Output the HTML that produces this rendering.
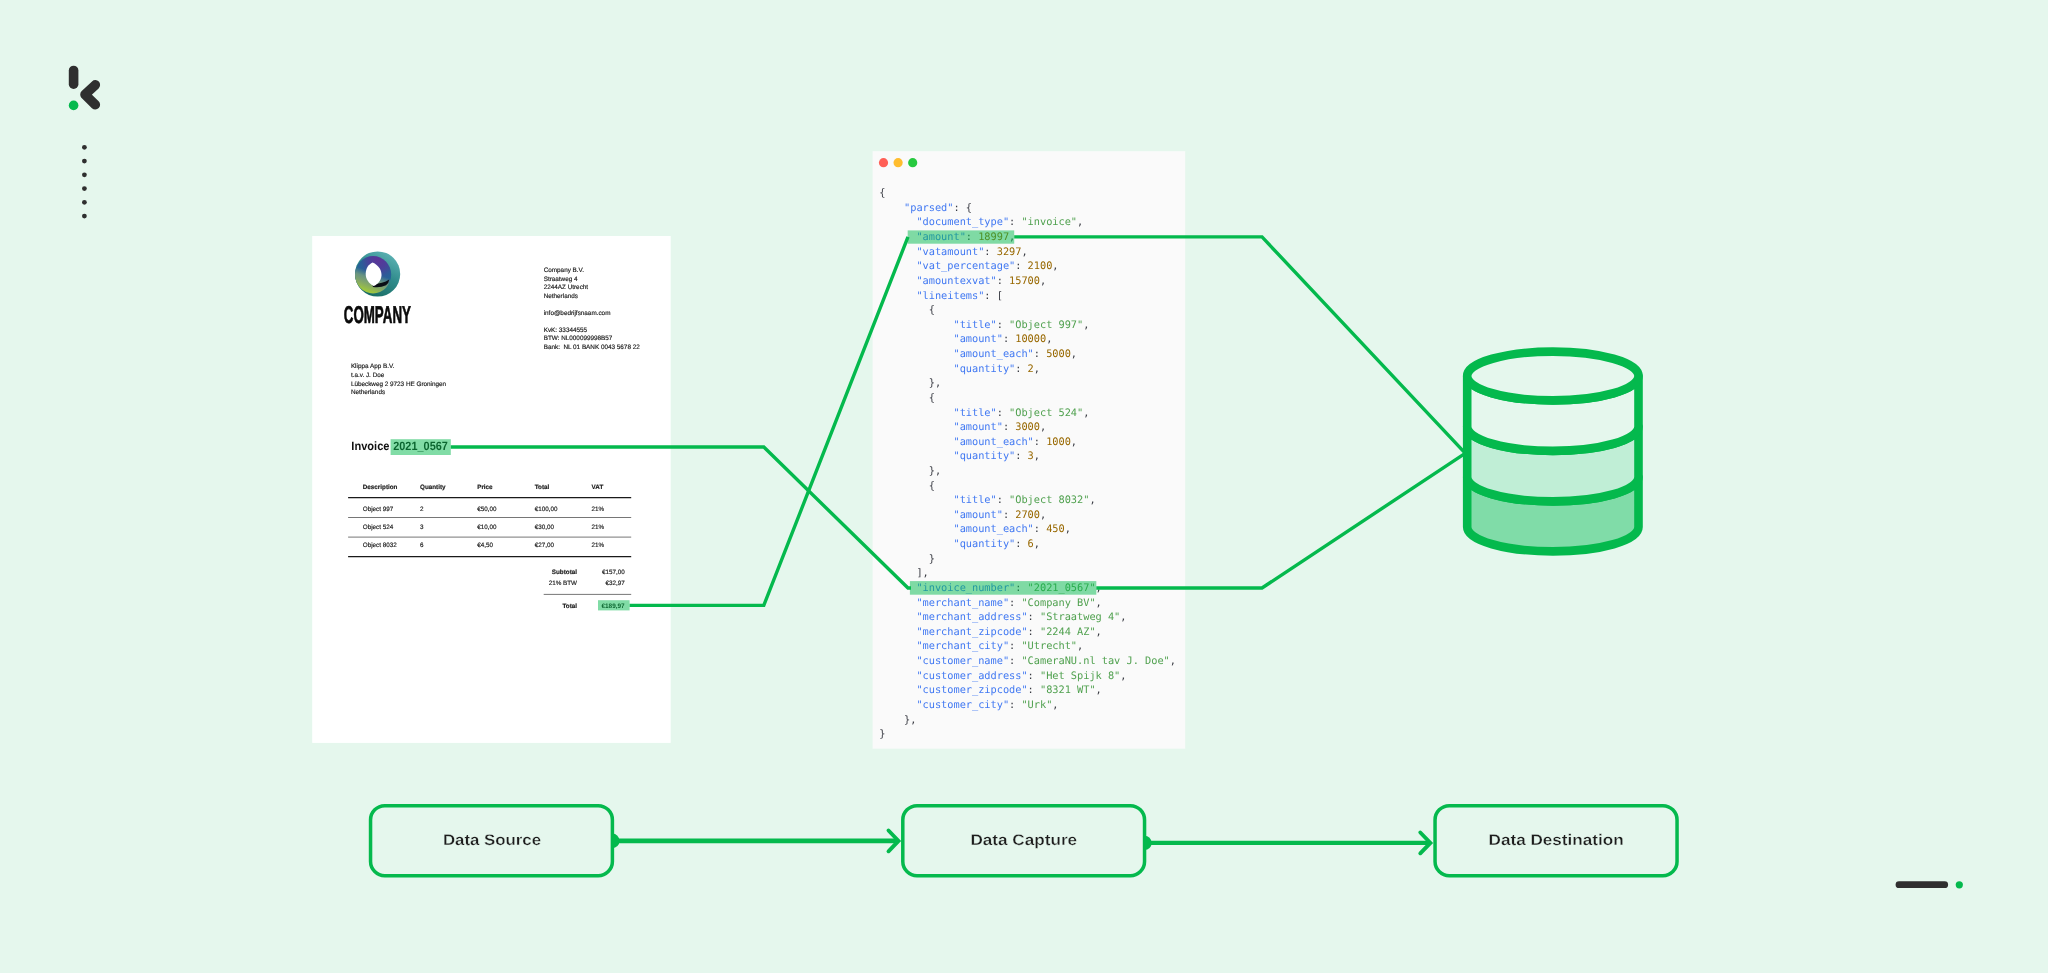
<!DOCTYPE html>
<html lang="en">
<head>
<meta charset="utf-8">
<title>Data Source - Data Capture - Data Destination</title>
<style>
html,body{margin:0;padding:0;background:#e5f7ed;}
body{width:2048px;height:973px;overflow:hidden;position:relative;font-family:"Liberation Sans",sans-serif;}
svg{position:absolute;left:0;top:0;display:block;will-change:transform;}
svg text{font-family:"Liberation Sans",sans-serif;text-rendering:geometricPrecision;}
svg .code text{font-family:"DejaVu Sans Mono","Liberation Mono",monospace;font-size:10.3px;white-space:pre;}
svg .lbl text{font-family:"Liberation Sans",sans-serif;font-weight:bold;font-size:15.4px;fill:#1c1c1c;text-anchor:middle;stroke:#e5f7ed;stroke-width:0.3px;}
</style>
</head>
<body>
<svg width="2048" height="973" viewBox="0 0 2048 973">
<defs>
<linearGradient id="gOuter" x1="0.8" y1="0.1" x2="0.3" y2="1">
<stop offset="0" stop-color="#58aeb0"/><stop offset="0.45" stop-color="#2e8a8a"/><stop offset="1" stop-color="#186a60"/>
</linearGradient>
<radialGradient id="gInner" cx="0.64" cy="0.1" r="0.62">
<stop offset="0" stop-color="#5c3498"/><stop offset="0.4" stop-color="#4b409a"/><stop offset="0.75" stop-color="#2c5c98"/><stop offset="1" stop-color="#236596"/>
</radialGradient>
<linearGradient id="gGreen" x1="0.58" y1="0.2" x2="0.3" y2="1">
<stop offset="0" stop-color="#6a9684" stop-opacity="0"/><stop offset="0.3" stop-color="#6a9684" stop-opacity="0"/><stop offset="0.5" stop-color="#6f9880" stop-opacity="0.92"/><stop offset="0.72" stop-color="#86a964"/><stop offset="0.9" stop-color="#9cc440"/><stop offset="1" stop-color="#a4cc38"/>
</linearGradient>
</defs>
<rect x="0" y="0" width="2048" height="973" fill="#e5f7ed"/>

<!-- klippa mark -->
<g>
<line x1="73.6" y1="70.5" x2="73.6" y2="84.2" stroke="#2f2f2f" stroke-width="9.6" stroke-linecap="round"/>
<circle cx="73.6" cy="105.4" r="4.8" fill="#04b94d"/>
<polyline points="95.3,84.9 85.0,94.6 95.3,104.7" fill="none" stroke="#2f2f2f" stroke-width="9.6" stroke-linecap="round" stroke-linejoin="round"/>
</g>
<g fill="#2f2f2f">
<circle cx="84.4" cy="147.30" r="2.4"/><circle cx="84.4" cy="161.05" r="2.4"/><circle cx="84.4" cy="174.80" r="2.4"/><circle cx="84.4" cy="188.55" r="2.4"/><circle cx="84.4" cy="202.30" r="2.4"/><circle cx="84.4" cy="216.05" r="2.4"/>
</g>
<rect x="1895.6" y="881.3" width="52.5" height="6.8" rx="3.4" fill="#2f2f2f"/>
<circle cx="1959.3" cy="884.8" r="3.6" fill="#04b94d"/>

<!-- invoice page -->
<rect x="312.2" y="236" width="358.5" height="506.9" fill="#ffffff"/>
<g>
<circle cx="377.6" cy="274" r="22.6" fill="url(#gOuter)"/>
<ellipse cx="373.1" cy="274.7" rx="18.1" ry="18.7" fill="url(#gInner)"/>
<ellipse cx="373.1" cy="274.7" rx="18.1" ry="18.7" fill="url(#gGreen)"/>
<path d="M372 284 Q383 284 389.2 279.6 Q389 283.2 386 285.2 Q380 288.2 373 287 Z" fill="#0a0e14"/>
<path d="M372.6 262.5 C378.6 265 381.8 270.5 381.5 275.6 C381.1 281 377.3 284.8 373.6 286.1 C368.8 283.2 365.5 279 365.7 273.4 C365.9 268 368.8 264.3 372.6 262.5 Z" fill="#ffffff"/>
</g>
<text x="343.8" y="323.3" font-size="24.2" font-weight="bold" fill="#0a0a0a" stroke="#0a0a0a" stroke-width="0.7" textLength="67.1" lengthAdjust="spacingAndGlyphs">COMPANY</text>
<text x="543.70" y="272.40" font-size="6.35" fill="#1a1a1a" stroke="#1a1a1a" stroke-width="0.16">Company B.V.</text>
<text x="543.70" y="280.80" font-size="6.35" fill="#1a1a1a" stroke="#1a1a1a" stroke-width="0.16">Straatweg 4</text>
<text x="543.70" y="289.40" font-size="6.35" fill="#1a1a1a" stroke="#1a1a1a" stroke-width="0.16">2244AZ Utrecht</text>
<text x="543.70" y="297.90" font-size="6.35" fill="#1a1a1a" stroke="#1a1a1a" stroke-width="0.16">Netherlands</text>
<text x="543.70" y="315.00" font-size="6.35" fill="#1a1a1a" stroke="#1a1a1a" stroke-width="0.16">info@bedrijfsnaam.com</text>
<text x="543.70" y="331.70" font-size="6.35" fill="#1a1a1a" stroke="#1a1a1a" stroke-width="0.16">KvK: 33344555</text>
<text x="543.70" y="340.40" font-size="6.35" fill="#1a1a1a" stroke="#1a1a1a" stroke-width="0.16">BTW: NL000099998B57</text>
<text x="543.70" y="348.80" font-size="6.35" fill="#1a1a1a" stroke="#1a1a1a" stroke-width="0.16">Bank:  NL 01 BANK 0043 5678 22</text>
<text x="350.90" y="368.40" font-size="6.35" fill="#1a1a1a" stroke="#1a1a1a" stroke-width="0.16">Klippa App B.V.</text>
<text x="350.90" y="377.00" font-size="6.35" fill="#1a1a1a" stroke="#1a1a1a" stroke-width="0.16">t.a.v. J. Doe</text>
<text x="350.90" y="385.60" font-size="6.35" fill="#1a1a1a" stroke="#1a1a1a" stroke-width="0.16">Lübeckweg 2 9723 HE Groningen</text>
<text x="350.90" y="394.10" font-size="6.35" fill="#1a1a1a" stroke="#1a1a1a" stroke-width="0.16">Netherlands</text>
<text x="362.80" y="489.20" font-size="6.30" fill="#1a1a1a" stroke="#1a1a1a" stroke-width="0.16" font-weight="bold">Description</text>
<text x="420.00" y="489.20" font-size="6.30" fill="#1a1a1a" stroke="#1a1a1a" stroke-width="0.16" font-weight="bold">Quantity</text>
<text x="477.20" y="489.20" font-size="6.30" fill="#1a1a1a" stroke="#1a1a1a" stroke-width="0.16" font-weight="bold">Price</text>
<text x="534.70" y="489.20" font-size="6.30" fill="#1a1a1a" stroke="#1a1a1a" stroke-width="0.16" font-weight="bold">Total</text>
<text x="591.60" y="489.20" font-size="6.30" fill="#1a1a1a" stroke="#1a1a1a" stroke-width="0.16" font-weight="bold">VAT</text>
<text x="362.80" y="510.90" font-size="6.30" fill="#1a1a1a" stroke="#1a1a1a" stroke-width="0.16">Object 997</text>
<text x="420.00" y="510.90" font-size="6.30" fill="#1a1a1a" stroke="#1a1a1a" stroke-width="0.16">2</text>
<text x="477.20" y="510.90" font-size="6.30" fill="#1a1a1a" stroke="#1a1a1a" stroke-width="0.16">€50,00</text>
<text x="534.70" y="510.90" font-size="6.30" fill="#1a1a1a" stroke="#1a1a1a" stroke-width="0.16">€100,00</text>
<text x="591.60" y="510.90" font-size="6.30" fill="#1a1a1a" stroke="#1a1a1a" stroke-width="0.16">21%</text>
<text x="362.80" y="528.90" font-size="6.30" fill="#1a1a1a" stroke="#1a1a1a" stroke-width="0.16">Object 524</text>
<text x="420.00" y="528.90" font-size="6.30" fill="#1a1a1a" stroke="#1a1a1a" stroke-width="0.16">3</text>
<text x="477.20" y="528.90" font-size="6.30" fill="#1a1a1a" stroke="#1a1a1a" stroke-width="0.16">€10,00</text>
<text x="534.70" y="528.90" font-size="6.30" fill="#1a1a1a" stroke="#1a1a1a" stroke-width="0.16">€30,00</text>
<text x="591.60" y="528.90" font-size="6.30" fill="#1a1a1a" stroke="#1a1a1a" stroke-width="0.16">21%</text>
<text x="362.80" y="547.10" font-size="6.30" fill="#1a1a1a" stroke="#1a1a1a" stroke-width="0.16">Object 8032</text>
<text x="420.00" y="547.10" font-size="6.30" fill="#1a1a1a" stroke="#1a1a1a" stroke-width="0.16">6</text>
<text x="477.20" y="547.10" font-size="6.30" fill="#1a1a1a" stroke="#1a1a1a" stroke-width="0.16">€4,50</text>
<text x="534.70" y="547.10" font-size="6.30" fill="#1a1a1a" stroke="#1a1a1a" stroke-width="0.16">€27,00</text>
<text x="591.60" y="547.10" font-size="6.30" fill="#1a1a1a" stroke="#1a1a1a" stroke-width="0.16">21%</text>
<text x="577.00" y="574.00" font-size="6.30" fill="#1a1a1a" stroke="#1a1a1a" stroke-width="0.16" font-weight="bold" text-anchor="end">Subtotal</text>
<text x="624.70" y="574.00" font-size="6.30" fill="#1a1a1a" stroke="#1a1a1a" stroke-width="0.16" text-anchor="end">€157,00</text>
<text x="577.00" y="585.30" font-size="6.30" fill="#1a1a1a" stroke="#1a1a1a" stroke-width="0.16" text-anchor="end">21% BTW</text>
<text x="624.70" y="585.30" font-size="6.30" fill="#1a1a1a" stroke="#1a1a1a" stroke-width="0.16" text-anchor="end">€32,97</text>
<text x="577.00" y="607.60" font-size="6.30" fill="#1a1a1a" stroke="#1a1a1a" stroke-width="0.16" font-weight="bold" text-anchor="end">Total</text>
<text x="351.3" y="450.3" font-size="12" font-weight="bold" fill="#111" textLength="38.2" lengthAdjust="spacingAndGlyphs">Invoice</text>
<text x="393.2" y="450.3" font-size="12" font-weight="bold" fill="#111" textLength="54.7" lengthAdjust="spacingAndGlyphs">2021_0567</text>
<g stroke="#1a1a1a" fill="none">
<line x1="348.1" y1="497.6" x2="631.2" y2="497.6" stroke-width="1.1"/>
<line x1="348.1" y1="517.5" x2="631.2" y2="517.5" stroke-width="0.6"/>
<line x1="348.1" y1="537.1" x2="631.2" y2="537.1" stroke-width="0.6"/>
<line x1="348.1" y1="556.6" x2="631.2" y2="556.6" stroke-width="1.1"/>
<line x1="543.7" y1="594.4" x2="631.2" y2="594.4" stroke-width="0.6"/>
</g>
<text x="624.7" y="607.6" font-size="6.5" font-weight="bold" fill="#111" text-anchor="end" textLength="23.3" lengthAdjust="spacingAndGlyphs">€189,97</text>

<!-- code window -->
<rect x="872.6" y="151.2" width="312.6" height="597.5" fill="#fafafa"/>
<circle cx="883.5" cy="162.7" r="4.6" fill="#ff5f56"/>
<circle cx="898.1" cy="162.7" r="4.6" fill="#ffbd2e"/>
<circle cx="912.7" cy="162.7" r="4.6" fill="#27c93f"/>
<g class="code">
<text x="879.30" y="196.20" textLength="6.18" lengthAdjust="spacing" xml:space="preserve"><tspan fill="#383a42">{</tspan></text>
<text x="904.02" y="210.82" textLength="67.98" lengthAdjust="spacing" xml:space="preserve"><tspan fill="#4078f2">&quot;parsed&quot;</tspan><tspan fill="#383a42">: {</tspan></text>
<text x="916.38" y="225.44" textLength="166.86" lengthAdjust="spacing" xml:space="preserve"><tspan fill="#4078f2">&quot;document_type&quot;</tspan><tspan fill="#383a42">: </tspan><tspan fill="#50a14f">&quot;invoice&quot;</tspan><tspan fill="#383a42">,</tspan></text>
<text x="916.38" y="240.06" textLength="98.88" lengthAdjust="spacing" xml:space="preserve"><tspan fill="#4078f2">&quot;amount&quot;</tspan><tspan fill="#383a42">: </tspan><tspan fill="#986801">18997</tspan><tspan fill="#383a42">,</tspan></text>
<text x="916.38" y="254.68" textLength="111.24" lengthAdjust="spacing" xml:space="preserve"><tspan fill="#4078f2">&quot;vatamount&quot;</tspan><tspan fill="#383a42">: </tspan><tspan fill="#986801">3297</tspan><tspan fill="#383a42">,</tspan></text>
<text x="916.38" y="269.30" textLength="142.14" lengthAdjust="spacing" xml:space="preserve"><tspan fill="#4078f2">&quot;vat_percentage&quot;</tspan><tspan fill="#383a42">: </tspan><tspan fill="#986801">2100</tspan><tspan fill="#383a42">,</tspan></text>
<text x="916.38" y="283.92" textLength="129.78" lengthAdjust="spacing" xml:space="preserve"><tspan fill="#4078f2">&quot;amountexvat&quot;</tspan><tspan fill="#383a42">: </tspan><tspan fill="#986801">15700</tspan><tspan fill="#383a42">,</tspan></text>
<text x="916.38" y="298.54" textLength="86.52" lengthAdjust="spacing" xml:space="preserve"><tspan fill="#4078f2">&quot;lineitems&quot;</tspan><tspan fill="#383a42">: [</tspan></text>
<text x="928.74" y="313.16" textLength="6.18" lengthAdjust="spacing" xml:space="preserve"><tspan fill="#383a42">{</tspan></text>
<text x="953.46" y="327.78" textLength="135.96" lengthAdjust="spacing" xml:space="preserve"><tspan fill="#4078f2">&quot;title&quot;</tspan><tspan fill="#383a42">: </tspan><tspan fill="#50a14f">&quot;Object 997&quot;</tspan><tspan fill="#383a42">,</tspan></text>
<text x="953.46" y="342.40" textLength="98.88" lengthAdjust="spacing" xml:space="preserve"><tspan fill="#4078f2">&quot;amount&quot;</tspan><tspan fill="#383a42">: </tspan><tspan fill="#986801">10000</tspan><tspan fill="#383a42">,</tspan></text>
<text x="953.46" y="357.02" textLength="123.60" lengthAdjust="spacing" xml:space="preserve"><tspan fill="#4078f2">&quot;amount_each&quot;</tspan><tspan fill="#383a42">: </tspan><tspan fill="#986801">5000</tspan><tspan fill="#383a42">,</tspan></text>
<text x="953.46" y="371.64" textLength="86.52" lengthAdjust="spacing" xml:space="preserve"><tspan fill="#4078f2">&quot;quantity&quot;</tspan><tspan fill="#383a42">: </tspan><tspan fill="#986801">2</tspan><tspan fill="#383a42">,</tspan></text>
<text x="928.74" y="386.26" textLength="12.36" lengthAdjust="spacing" xml:space="preserve"><tspan fill="#383a42">},</tspan></text>
<text x="928.74" y="400.88" textLength="6.18" lengthAdjust="spacing" xml:space="preserve"><tspan fill="#383a42">{</tspan></text>
<text x="953.46" y="415.50" textLength="135.96" lengthAdjust="spacing" xml:space="preserve"><tspan fill="#4078f2">&quot;title&quot;</tspan><tspan fill="#383a42">: </tspan><tspan fill="#50a14f">&quot;Object 524&quot;</tspan><tspan fill="#383a42">,</tspan></text>
<text x="953.46" y="430.12" textLength="92.70" lengthAdjust="spacing" xml:space="preserve"><tspan fill="#4078f2">&quot;amount&quot;</tspan><tspan fill="#383a42">: </tspan><tspan fill="#986801">3000</tspan><tspan fill="#383a42">,</tspan></text>
<text x="953.46" y="444.74" textLength="123.60" lengthAdjust="spacing" xml:space="preserve"><tspan fill="#4078f2">&quot;amount_each&quot;</tspan><tspan fill="#383a42">: </tspan><tspan fill="#986801">1000</tspan><tspan fill="#383a42">,</tspan></text>
<text x="953.46" y="459.36" textLength="86.52" lengthAdjust="spacing" xml:space="preserve"><tspan fill="#4078f2">&quot;quantity&quot;</tspan><tspan fill="#383a42">: </tspan><tspan fill="#986801">3</tspan><tspan fill="#383a42">,</tspan></text>
<text x="928.74" y="473.98" textLength="12.36" lengthAdjust="spacing" xml:space="preserve"><tspan fill="#383a42">},</tspan></text>
<text x="928.74" y="488.60" textLength="6.18" lengthAdjust="spacing" xml:space="preserve"><tspan fill="#383a42">{</tspan></text>
<text x="953.46" y="503.22" textLength="142.14" lengthAdjust="spacing" xml:space="preserve"><tspan fill="#4078f2">&quot;title&quot;</tspan><tspan fill="#383a42">: </tspan><tspan fill="#50a14f">&quot;Object 8032&quot;</tspan><tspan fill="#383a42">,</tspan></text>
<text x="953.46" y="517.84" textLength="92.70" lengthAdjust="spacing" xml:space="preserve"><tspan fill="#4078f2">&quot;amount&quot;</tspan><tspan fill="#383a42">: </tspan><tspan fill="#986801">2700</tspan><tspan fill="#383a42">,</tspan></text>
<text x="953.46" y="532.46" textLength="117.42" lengthAdjust="spacing" xml:space="preserve"><tspan fill="#4078f2">&quot;amount_each&quot;</tspan><tspan fill="#383a42">: </tspan><tspan fill="#986801">450</tspan><tspan fill="#383a42">,</tspan></text>
<text x="953.46" y="547.08" textLength="86.52" lengthAdjust="spacing" xml:space="preserve"><tspan fill="#4078f2">&quot;quantity&quot;</tspan><tspan fill="#383a42">: </tspan><tspan fill="#986801">6</tspan><tspan fill="#383a42">,</tspan></text>
<text x="928.74" y="561.70" textLength="6.18" lengthAdjust="spacing" xml:space="preserve"><tspan fill="#383a42">}</tspan></text>
<text x="916.38" y="576.32" textLength="12.36" lengthAdjust="spacing" xml:space="preserve"><tspan fill="#383a42">],</tspan></text>
<text x="916.38" y="590.94" textLength="185.40" lengthAdjust="spacing" xml:space="preserve"><tspan fill="#4078f2">&quot;invoice_number&quot;</tspan><tspan fill="#383a42">: </tspan><tspan fill="#50a14f">&quot;2021_0567&quot;</tspan><tspan fill="#383a42">,</tspan></text>
<text x="916.38" y="605.56" textLength="185.40" lengthAdjust="spacing" xml:space="preserve"><tspan fill="#4078f2">&quot;merchant_name&quot;</tspan><tspan fill="#383a42">: </tspan><tspan fill="#50a14f">&quot;Company BV&quot;</tspan><tspan fill="#383a42">,</tspan></text>
<text x="916.38" y="620.18" textLength="210.12" lengthAdjust="spacing" xml:space="preserve"><tspan fill="#4078f2">&quot;merchant_address&quot;</tspan><tspan fill="#383a42">: </tspan><tspan fill="#50a14f">&quot;Straatweg 4&quot;</tspan><tspan fill="#383a42">,</tspan></text>
<text x="916.38" y="634.80" textLength="185.40" lengthAdjust="spacing" xml:space="preserve"><tspan fill="#4078f2">&quot;merchant_zipcode&quot;</tspan><tspan fill="#383a42">: </tspan><tspan fill="#50a14f">&quot;2244 AZ&quot;</tspan><tspan fill="#383a42">,</tspan></text>
<text x="916.38" y="649.42" textLength="166.86" lengthAdjust="spacing" xml:space="preserve"><tspan fill="#4078f2">&quot;merchant_city&quot;</tspan><tspan fill="#383a42">: </tspan><tspan fill="#50a14f">&quot;Utrecht&quot;</tspan><tspan fill="#383a42">,</tspan></text>
<text x="916.38" y="664.04" textLength="259.56" lengthAdjust="spacing" xml:space="preserve"><tspan fill="#4078f2">&quot;customer_name&quot;</tspan><tspan fill="#383a42">: </tspan><tspan fill="#50a14f">&quot;CameraNU.nl tav J. Doe&quot;</tspan><tspan fill="#383a42">,</tspan></text>
<text x="916.38" y="678.66" textLength="210.12" lengthAdjust="spacing" xml:space="preserve"><tspan fill="#4078f2">&quot;customer_address&quot;</tspan><tspan fill="#383a42">: </tspan><tspan fill="#50a14f">&quot;Het Spijk 8&quot;</tspan><tspan fill="#383a42">,</tspan></text>
<text x="916.38" y="693.28" textLength="185.40" lengthAdjust="spacing" xml:space="preserve"><tspan fill="#4078f2">&quot;customer_zipcode&quot;</tspan><tspan fill="#383a42">: </tspan><tspan fill="#50a14f">&quot;8321 WT&quot;</tspan><tspan fill="#383a42">,</tspan></text>
<text x="916.38" y="707.90" textLength="142.14" lengthAdjust="spacing" xml:space="preserve"><tspan fill="#4078f2">&quot;customer_city&quot;</tspan><tspan fill="#383a42">: </tspan><tspan fill="#50a14f">&quot;Urk&quot;</tspan><tspan fill="#383a42">,</tspan></text>
<text x="904.02" y="722.52" textLength="12.36" lengthAdjust="spacing" xml:space="preserve"><tspan fill="#383a42">},</tspan></text>
<text x="879.30" y="737.14" textLength="6.18" lengthAdjust="spacing" xml:space="preserve"><tspan fill="#383a42">}</tspan></text>
</g>

<!-- highlights -->
<g fill="#04b94d" fill-opacity="0.5">
<rect x="390.6" y="439.2" width="60.2" height="15.8"/>
<rect x="598" y="600.2" width="31.6" height="10.2"/>
<rect x="907.7" y="230.4" width="106.5" height="13.3"/>
<rect x="909.9" y="581.1" width="186.4" height="13.6"/>
</g>

<!-- connector lines -->
<g fill="none" stroke="#04b94d" stroke-linejoin="miter">
<polyline points="450.8,447 763.8,447 908,588 911,588" stroke-width="3.4"/>
<polyline points="629.6,605.4 763.8,605.4 908,236.9" stroke-width="3.4"/>
<polyline points="1014.2,236.9 1262,236.9 1464,451.8" stroke-width="3.4"/>
<polyline points="1096.3,588 1262,588 1464,454.1" stroke-width="3.4"/>
</g>

<!-- database -->
<g stroke="#04b94d" stroke-width="8.6" stroke-linejoin="round">
<path d="M1467.2 477 A85.65 24.4 0 0 0 1638.5 477 L1638.5 527 A85.65 24.4 0 0 1 1467.2 527 Z" fill="#80dca8"/>
<path d="M1467.2 426.5 A85.65 24.4 0 0 0 1638.5 426.5 L1638.5 477 A85.65 24.4 0 0 1 1467.2 477 Z" fill="#c0eed6"/>
<path d="M1467.2 376 A85.65 24.4 0 0 0 1638.5 376 L1638.5 426.5 A85.65 24.4 0 0 1 1467.2 426.5 Z" fill="#e5f7ed"/>
<ellipse cx="1552.85" cy="376" rx="85.65" ry="24.4" fill="#e5f7ed"/>
</g>

<!-- bottom flow -->
<g fill="none" stroke="#04b94d" stroke-width="3.5">
<rect x="370.55" y="805.7" width="241.85" height="70" rx="14.2"/>
<rect x="902.8" y="805.7" width="241.75" height="70" rx="14.2"/>
<rect x="1435.05" y="805.7" width="242" height="70" rx="14.2"/>
</g>
<g fill="none" stroke="#04b94d">
<line x1="612.4" y1="840.9" x2="898" y2="840.9" stroke-width="4.6"/>
<polyline points="888.5,830.5 898.5,840.9 888.5,851.3" stroke-width="3.9" stroke-linecap="round" stroke-linejoin="miter"/>
<line x1="1144.6" y1="842.9" x2="1430" y2="842.9" stroke-width="4.3"/>
<polyline points="1420.3,832.5 1430.4,842.9 1420.3,853.3" stroke-width="3.9" stroke-linecap="round" stroke-linejoin="miter"/>
</g>
<path d="M612.4 833.6 A7.1 7.3 0 0 1 612.4 848.2 Z" fill="#04b94d"/>
<path d="M1144.6 835.7 A7 7.2 0 0 1 1144.6 850.1 Z" fill="#04b94d"/>
<g class="lbl">
<text x="492.0" y="844.7" textLength="98.2" lengthAdjust="spacingAndGlyphs">Data Source</text>
<text x="1023.8" y="844.7" textLength="106.7" lengthAdjust="spacingAndGlyphs">Data Capture</text>
<text x="1556.1" y="844.7" textLength="135.1" lengthAdjust="spacingAndGlyphs">Data Destination</text>
</g>
</svg>
</body>
</html>
